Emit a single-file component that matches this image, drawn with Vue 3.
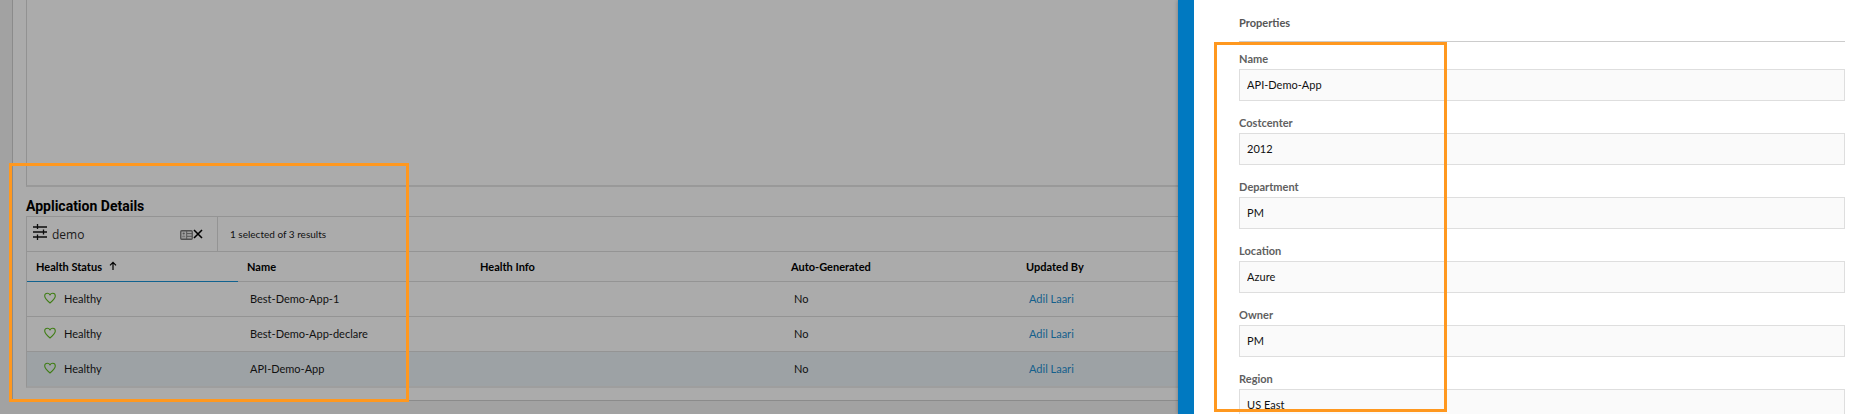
<script setup>
import { ref } from 'vue'

const filter = ref('demo')

const rows = [
  { name: 'Best-Demo-App-1', selected: false },
  { name: 'Best-Demo-App-declare', selected: false },
  { name: 'API-Demo-App', selected: true },
]

const fields = ref([
  { label: 'Name', value: 'API-Demo-App' },
  { label: 'Costcenter', value: '2012' },
  { label: 'Department', value: 'PM' },
  { label: 'Location', value: 'Azure' },
  { label: 'Owner', value: 'PM' },
  { label: 'Region', value: 'US East' },
])
</script>

<template>
  <div class="screen">
    <main class="page">
      <div class="card">
        <div class="chart"></div>
        <h2 class="title">Application Details</h2>
        <section class="grid">
          <div class="toolbar">
            <div class="search">
              <button class="icon-btn filter-btn" type="button" aria-label="Filter options">
                <svg width="14" height="18" viewBox="0 0 14 18" fill="none" stroke="#0c0c0c" stroke-width="1.3">
                  <path d="M0 4h14M0 9h14M0 14h14M4.500 1v5M10.500 6.500v5M4.500 11.500v5.500" />
                </svg>
              </button>
              <input v-model="filter" class="search-input" type="text" aria-label="Filter applications" />
              <svg class="contact" width="13" height="10" viewBox="0 0 13 10" aria-hidden="true">
                <rect x=".75" y=".75" width="11.500" height="8.500" rx="1" fill="#a0a0a0" stroke="#4f4f4f" stroke-width="1.300" />
                <circle cx="3.700" cy="3.500" r="1.100" fill="#555" />
                <path d="M2 7.200c0-2.200 3.400-2.200 3.400 0z" fill="#777" />
                <path d="M6.700 1v8M7 3.600h5M7 6.300h5" fill="none" stroke="#555" />
              </svg>
              <button class="icon-btn" type="button" aria-label="Clear filter">
                <svg width="10" height="10" viewBox="0 0 10 10" fill="none" stroke="#000" stroke-width="1.6">
                  <path d="M1 1l8 8M9 1L1 9" />
                </svg>
              </button>
            </div>
            <p class="count">1 selected of 3 results</p>
          </div>
          <table class="table">
            <colgroup>
              <col class="c-health" />
              <col class="c-name" />
              <col class="c-info" />
              <col class="c-auto" />
              <col />
            </colgroup>
            <thead>
              <tr>
                <th class="sorted" aria-sort="ascending">
                  <button class="sort" type="button">
                    Health Status
                    <svg width="8" height="10" viewBox="0 0 8 10" fill="none" stroke="#000" stroke-width="1.2">
                      <path d="M4 9V1.5M1 4.3l3-3 3 3" />
                    </svg>
                  </button>
                </th>
                <th>Name</th>
                <th>Health Info</th>
                <th>Auto-Generated</th>
                <th>Updated By</th>
              </tr>
            </thead>
            <tbody>
              <tr v-for="row in rows" :key="row.name" :class="{ selected: row.selected }">
                <td>
                  <span class="health">
                    <svg width="12" height="12" viewBox="0 0 12 12" fill="none" stroke="#3f7d14" stroke-width="1.1" stroke-linejoin="round">
                      <path d="M6 11C3.5 9 .7 6.700 .7 4.100 .7 2.300 1.900 1.200 3.300 1.200 4.600 1.200 5.500 1.900 6 3 6.500 1.900 7.400 1.200 8.700 1.200 10.100 1.200 11.300 2.300 11.300 4.100 11.300 6.700 8.500 9 6 11Z" />
                    </svg>
                    Healthy
                  </span>
                </td>
                <td>{{ row.name }}</td>
                <td></td>
                <td>No</td>
                <td><a class="link" href="#">Adil Laari</a></td>
              </tr>
            </tbody>
          </table>
        </section>
      </div>
    </main>
    <aside class="panel">
      <h3 class="panel-title">Properties</h3>
      <div v-for="field in fields" :key="field.label" class="field">
        <label :for="'f-' + field.label">{{ field.label }}</label>
        <input :id="'f-' + field.label" v-model="field.value" type="text" readonly />
      </div>
    </aside>
    <div class="mark mark-table"></div>
    <div class="mark mark-form"></div>
  </div>
</template>

<style>
body {
  margin: 0;
}
</style>

<style scoped>
* {
  box-sizing: border-box;
}
.screen {
  position: relative;
  display: flex;
  height: 100vh;
  overflow: hidden;
  font-family: Lato, "Open Sans", sans-serif;
  font-size: 11px;
  color: #111;
}
.page {
  flex: 1;
  min-width: 0;
  padding-left: 12px;
  background: #a2a2a2;
}
.card {
  padding: 0 0 12px 13px;
  border-left: 1px solid #8b8b8b;
  border-bottom: 1px solid #8b8b8b;
  background: #ababab;
}
.chart {
  height: 187px;
  border-left: 1px solid #929292;
  border-bottom: 2px solid #999;
}
.title {
  margin: 0;
  padding-top: 9px;
  font-family: Roboto, sans-serif;
  font-size: 14px;
  line-height: 20px;
  font-weight: 700;
  color: #000;
}
.grid {
  border: 1px solid #949494;
  border-right: 0;
  border-bottom: 2px solid #9e9e9e;
}
.toolbar {
  display: flex;
  height: 35px;
  border-bottom: 1px solid #949494;
}
.search {
  display: flex;
  align-items: center;
  width: 191px;
  padding: 0 14px 0 6px;
  border-right: 1px solid #949494;
}
.icon-btn {
  display: flex;
  padding: 0;
  border: 0;
  background: none;
}
.filter-btn {
  padding-bottom: 4px;
}
.search-input {
  flex: 1;
  min-width: 0;
  padding: 2px 0 0 5px;
  border: 0;
  background: none;
  font: 12px/20px "Open Sans", sans-serif;
  color: #1a1a1a;
}
.contact {
  margin-top: 2px;
}
.count {
  margin: 0;
  padding-left: 12px;
  font-size: 10px;
  line-height: 34px;
}
.table {
  width: 100%;
  border-collapse: separate;
  border-spacing: 0;
  table-layout: fixed;
}
.c-health {
  width: 211px;
}
.c-name {
  width: 233px;
}
.c-info {
  width: 311px;
}
.c-auto {
  width: 235px;
}
th,
td {
  border-bottom: 1px solid #949494;
  text-align: left;
  white-space: nowrap;
}
th {
  height: 30px;
  padding: 0 9px 1px;
  font-weight: 700;
  color: #000;
}
td {
  height: 35px;
  padding: 0 12px 2px;
}
tbody tr:last-child td {
  height: 34px;
  border-bottom: 0;
}
thead tr:last-child th.sorted {
  border-bottom-color: #11628f;
}
.sort {
  display: flex;
  align-items: center;
  gap: 7px;
  padding: 0;
  border: 0;
  background: none;
  font: inherit;
  color: inherit;
}
.selected {
  background: #9da2a5;
}
.health {
  display: flex;
  align-items: center;
  gap: 8px;
  padding-left: 5px;
}
.link {
  color: #14608c;
  text-decoration: none;
}
.panel {
  position: relative;
  flex: 0 0 37%;
  padding: 0 25px 0 45px;
  border-left: 16px solid #0079c1;
  background: #fff;
  box-shadow: 0 0 4px rgba(0, 0, 0, 0.3);
}
.panel-title {
  height: 42px;
  margin: 0;
  padding-top: 13px;
  border-bottom: 1px solid #ccc;
  font-size: 11px;
  line-height: 20px;
  font-weight: 700;
  color: #565656;
}
.field {
  padding-top: 8px;
}
.field + .field {
  padding-top: 13px;
}
.field label {
  display: block;
  height: 19px;
  font-size: 11px;
  line-height: 18px;
  font-weight: 700;
  color: #606060;
}
.field input {
  display: block;
  width: 100%;
  height: 32px;
  padding: 0 7px 1px;
  border: 1px solid #dedede;
  background: #fafafa;
  font: 11px/20px Lato, sans-serif;
  color: #111;
}
.mark {
  position: absolute;
  border: 3px solid #ff981f;
  pointer-events: none;
}
.mark-table {
  left: 9px;
  top: 163px;
  width: 400px;
  height: 239px;
}
.mark-form {
  left: 1214px;
  top: 42px;
  width: 233px;
  height: 370px;
}
</style>
